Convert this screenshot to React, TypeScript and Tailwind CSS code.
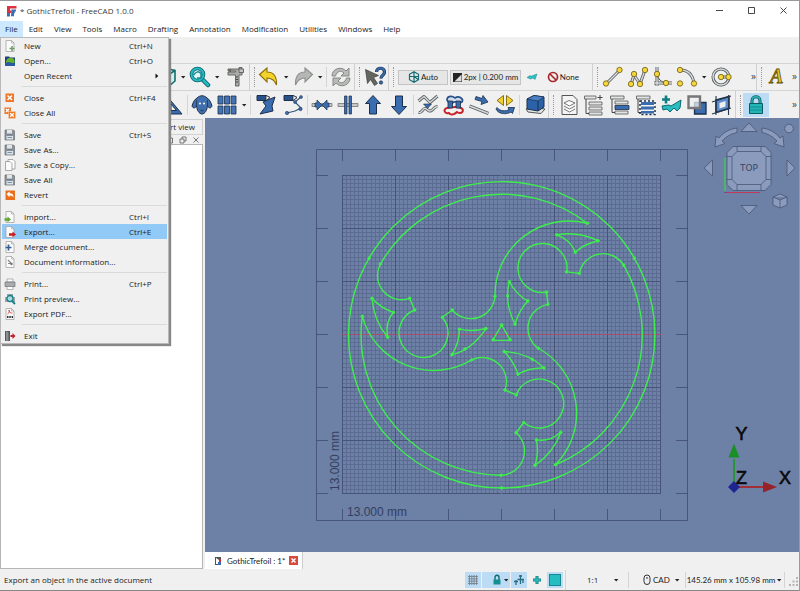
import React from "react";

type Kids = { children: React.ReactNode };

/* ---------- shared icon helpers ---------- */

const NAVY = "#1c2f4a";
const BLUE = "#3a6db0";

function Glyph({ children }: Kids) {
  return (
    <svg viewBox="0 0 22 22" className="size-[22px] shrink-0" fill="none" aria-hidden="true">
      {children}
    </svg>
  );
}

function Mini({ children }: Kids) {
  return (
    <svg viewBox="0 0 12 12" className="size-3 shrink-0" fill="none" aria-hidden="true">
      {children}
    </svg>
  );
}

function Caret() {
  return (
    <svg viewBox="0 0 8 8" className="size-2 shrink-0" aria-hidden="true">
      <path d="M2 3h4.400L4.200 5.600z" fill="#222" />
    </svg>
  );
}

function Tool({ label, drop, children }: Kids & { label: string; drop?: boolean }) {
  return (
    <button
      type="button"
      aria-label={label}
      className={
        drop
          ? "flex h-6 w-[34px] shrink-0 items-center pl-px"
          : "flex h-6 min-w-[25px] flex-1 items-center justify-center"
      }
    >
      {children}
      {drop && (
        <span className="ml-0.5">
          <Caret />
        </span>
      )}
    </button>
  );
}

function Sep() {
  return <span className="mx-px h-5 w-px shrink-0 bg-[#d4d4d4]" />;
}

function Handle() {
  return (
    <span className="flex h-full w-2 shrink-0 items-center border-l border-[#cfcfcf] pl-1">
      <span className="h-5 w-px border-l border-dotted border-[#999]" />
    </span>
  );
}

function Node({ x, y, r = 2.7 }: { x: number; y: number; r?: number }) {
  return <circle cx={x} cy={y} r={r} fill="#f5d63c" stroke="#6b5a10" strokeWidth=".8" />;
}

function Pipe({ d }: { d: string }) {
  return (
    <>
      <path d={d} stroke="#555a5e" strokeWidth="3" strokeLinejoin="round" />
      <path d={d} stroke="#d9dcdc" strokeWidth="1.400" strokeLinejoin="round" />
    </>
  );
}

/* ---------- file menu ---------- */

function Sheet({ children }: { children?: React.ReactNode }) {
  return (
    <Mini>
      <path d="M2 .5h5.500L10 3v8.500H2z" fill="#fbfbfb" stroke="#9a9a9a" strokeWidth=".7" />
      <path d="M7.500.5V3H10" stroke="#9a9a9a" strokeWidth=".6" />
      {children}
    </Mini>
  );
}

function Floppy() {
  return (
    <Mini>
      <path d="M1 1h8.500l1 1v9H1z" fill="#8f9396" stroke="#6a6e72" strokeWidth=".7" />
      <path d="M3 1h5v3.500H3z" fill="#e3e6e8" />
      <path d="M2.500 7H9v3.500H2.500z" fill="#dbe2e8" />
      <path d="M3 5.700h5.500M3.500 8.500H8" stroke="#5a7ca6" strokeWidth=".8" />
    </Mini>
  );
}

function Cross({ small }: { small?: boolean }) {
  if (small)
    return (
      <Mini>
        <path d="M.5.5h6.500v6.500H.5z" fill="#ee7624" />
        <path d="M4.500 4.500h7v7h-7z" fill="#ee7624" stroke="#f7d3b8" strokeWidth=".5" />
        <path d="M2 2l2.500 2.500M5 2L2 5M6.200 6.200l3.600 3.600M9.800 6.200L6.200 9.800" stroke="#fff" strokeWidth="1.300" />
      </Mini>
    );
  return (
    <Mini>
      <path d="M1.500 1.500H10V10H1.500z" fill="#ee7624" />
      <path d="M3.500 3.500L8 8M8 3.500L3.500 8" stroke="#fff" strokeWidth="1.500" />
    </Mini>
  );
}

const folder = (
  <Mini>
    <path d="M1 1.500h4l1 1h5V11H1z" fill="#1f3f78" />
    <path d="M2 6c1-4 7-4.500 8.500-1v3H2z" fill="#63b32e" />
    <path d="M1 8l3-1 7 1.500V11H1z" fill="#2a5aa0" />
  </Mini>
);

type Entry = { label: string; keys?: string; icon?: React.ReactNode; sub?: boolean };

const fileMenu: Entry[][] = [
  [
    { label: "New", keys: "Ctrl+N", icon: <Sheet><path d="M8 6v5M5.500 8.500h5" stroke="#6f9a66" strokeWidth="1.500" /></Sheet> },
    { label: "Open...", keys: "Ctrl+O", icon: folder },
    { label: "Open Recent", sub: true },
  ],
  [
    { label: "Close", keys: "Ctrl+F4", icon: <Cross /> },
    { label: "Close All", icon: <Cross small /> },
  ],
  [
    { label: "Save", keys: "Ctrl+S", icon: <Floppy /> },
    { label: "Save As...", icon: <Floppy /> },
    {
      label: "Save a Copy...",
      icon: (
        <Mini>
          <path d="M4 .5h5l2 2v7.500H4z" fill="#fff" stroke="#888" strokeWidth=".7" />
          <path d="M1.500 2.500h4.500l2 2v7H1.500z" fill="#fbfbfb" stroke="#888" strokeWidth=".7" />
        </Mini>
      ),
    },
    { label: "Save All", icon: <Floppy /> },
    {
      label: "Revert",
      icon: (
        <Mini>
          <path d="M1.500 1.500h9.500v9.500H1.500z" fill="#e8701c" />
          <path d="M2.500 5l3-2.500v1.700c3 0 4 1.500 4 4.300-1-1.500-2-2-4-2v1.700z" fill="#fff" />
        </Mini>
      ),
    },
  ],
  [
    { label: "Import...", keys: "Ctrl+I", icon: <Sheet><path d="M.5 7.300h3V5.500L7 8.500l-3.500 2.800V9.700h-3z" fill="#5fa630" /></Sheet> },
    { label: "Export...", keys: "Ctrl+E", icon: <Sheet><path d="M5 7.300h3.500V5.500L12 8.500l-3.500 2.800V9.700H5z" fill="#c81e1e" /></Sheet> },
    { label: "Merge document...", icon: <Sheet><path d="M4.500 3.500v6M1.500 6.500h6" stroke="#355f94" strokeWidth="1.700" /></Sheet> },
    {
      label: "Document information...",
      icon: (
        <Sheet>
          <path d="M4 4l4 4M4 7.500h3" stroke="#888" strokeWidth="1.200" />
          <circle cx="7.500" cy="8" r="1.200" fill="#777" />
        </Sheet>
      ),
    },
  ],
  [
    {
      label: "Print...",
      keys: "Ctrl+P",
      icon: (
        <Mini>
          <path d="M3 1h6v3H3zM3 7.500h6v4H3z" fill="#fff" stroke="#888" strokeWidth=".6" />
          <path d="M1 4h10v4.500H1z" fill="#a9acae" stroke="#6f7274" strokeWidth=".7" />
        </Mini>
      ),
    },
    {
      label: "Print preview...",
      icon: (
        <Mini>
          <path d="M1 4h10v5H1zM3 1h6v3H3z" fill="#9fa3a6" />
          <circle cx="6" cy="5.500" r="3" fill="#a6dcdc" stroke="#16808a" strokeWidth="1.300" />
          <path d="M8 8l3 3" stroke="#16808a" strokeWidth="1.800" />
        </Mini>
      ),
    },
    {
      label: "Export PDF...",
      icon: (
        <Sheet>
          <path d="M3.500 6c2-1 2-3 1.500-4 0 2 2 3.500 3.500 3" stroke="#d03030" strokeWidth=".8" />
          <path d="M3 9h1.500M5.300 9h1.500M7.600 9H9" stroke="#333" strokeWidth="2" />
        </Sheet>
      ),
    },
  ],
  [
    {
      label: "Exit",
      icon: (
        <Mini>
          <path d="M1 1h5v10H1z" fill="#55585a" />
          <path d="M2 1l2.500 1.500v9L2 10.500z" fill="#8d9092" />
          <path d="M6.500 5h2V3L11.500 6l-3 3V7h-2z" fill="#c81e2e" />
        </Mini>
      ),
    },
  ],
];

function FileMenu() {
  return (
    <div
      role="menu"
      className="absolute top-full left-0 z-20 w-[169px] border border-[#b9b9b9] bg-[#f0f0f0] px-px shadow-[2px_2px_1px_#888]"
    >
      {fileMenu.map((section, i) => (
        <div key={i} role="group">
          {i > 0 && <div className="my-[3px] ml-5 h-px bg-[#dadada]" />}
          {section.map((e) => (
            <button
              key={e.label}
              type="button"
              role="menuitem"
              className={
                e.label === "Export..."
                  ? "flex h-[15px] w-full items-center bg-[#91c9f7] pl-0.5 text-left"
                  : "flex h-[15px] w-full items-center pl-0.5 text-left"
              }
            >
              <span className="w-5 shrink-0">{e.icon}</span>
              <span className="flex-1 whitespace-nowrap">{e.label}</span>
              {e.keys && <span className="w-[38px] whitespace-nowrap">{e.keys}</span>}
              {e.sub && (
                <svg viewBox="0 0 8 8" className="mr-1.5 size-2" aria-hidden="true">
                  <path d="M2.500 1.500v5L5.300 4z" fill="#111" />
                </svg>
              )}
            </button>
          ))}
        </div>
      ))}
    </div>
  );
}

/* ---------- window chrome ---------- */

function TitleBar() {
  return (
    <header className="flex h-[19px] items-center bg-white pl-1.5 text-[#3a3a3a]">
      <svg viewBox="0 0 12 12" className="size-3" aria-hidden="true">
        <path d="M1 1h9.500v2.500H4v2h1.500v2.500H4V10H1z" fill="#dc3340" />
        <path d="M5.500 4.500H10V6.500H8.500l.5 1.200-1 1v2.500H5z" fill="#3b6db8" />
        <path d="M1 8h3v3.500H1z" fill="#3b6db8" />
      </svg>
      <h1 className="ml-0.5 flex-1 whitespace-nowrap">* GothicTrefoil - FreeCAD 1.0.0</h1>
      {[
        ["Minimize", "M1 4.500h7"],
        ["Maximize", "M1.500 1.500h6v6h-6z"],
        ["Close", "M1.500 1.500l6 6M7.500 1.500l-6 6"],
      ].map(([label, d]) => (
        <button key={label} type="button" aria-label={label} className="flex w-8 justify-center">
          <svg viewBox="0 0 9 9" className="size-[9px]" fill="none" stroke="#333" strokeWidth=".9" aria-hidden="true">
            <path d={d} />
          </svg>
        </button>
      ))}
    </header>
  );
}

const menus = ["File", "Edit", "View", "Tools", "Macro", "Drafting", "Annotation", "Modification", "Utilities", "Windows", "Help"];

function MenuBar() {
  return (
    <nav className="relative flex h-[17px] shrink-0 items-center gap-px bg-white">
      {menus.map((m) => (
        <button
          key={m}
          type="button"
          className={m === "File" ? "h-4 bg-[#cce8ff] px-[5px]" : "h-4 px-[5px]"}
        >
          {m}
        </button>
      ))}
      <FileMenu />
    </nav>
  );
}

/* ---------- toolbars ---------- */

const upArrow = "M11 1.500l7.500 8h-4V20h-7V9.500h-4z";

function More() {
  return <span className="w-2 shrink-0 text-center text-[10px] leading-none text-[#444]">»</span>;
}

function TopTools() {
  return (
    <div className="flex h-[27px] items-center border-t border-[#d4d4d4] pl-[154px]">
      <Tool label="Standard views" drop>
        <Glyph>
          <path d="M4 6l7-3.500 9 2V15l-6 5-10-3z" fill="#d4eeee" stroke="#136e6e" strokeWidth="1.600" />
          <path d="M4 6l10 2.500 6-4M14 8.500V20" stroke="#136e6e" strokeWidth="1.600" />
        </Glyph>
      </Tool>
      <Tool label="Fit all" drop>
        <Glyph>
          <path d="M13 13l6 6" stroke="#0c5f66" strokeWidth="4.500" strokeLinecap="round" />
          <path d="M13 13l6 6" stroke="#23bcc4" strokeWidth="2.600" strokeLinecap="round" />
          <circle cx="8.500" cy="8.500" r="6" fill="#dff4f4" stroke="#0c5f66" strokeWidth="3.600" />
          <circle cx="8.500" cy="8.500" r="6" stroke="#23bcc4" strokeWidth="2" />
          <path d="M4.500 9c3-4 5-4 8-1M8 12h4V8" stroke="#168a90" strokeWidth="1.500" />
        </Glyph>
      </Tool>
      <span className="flex w-[27px]">
        <Tool label="Measure">
          <Glyph>
            <path d="M3 3h11V1.500h3V9h-3v11h-3.500V9H3V6h7.500V5H3z" fill="#a9aca8" stroke="#5b5e5a" strokeWidth=".9" />
            <path d="M14 3h4.500v3.500H14z" fill="#c4c6c4" stroke="#5b5e5a" strokeWidth=".9" />
            <path d="M11 11h2M11 13.500h2M11 16h2M5 3v3" stroke="#444" />
          </Glyph>
        </Tool>
      </span>
      <Handle />
      <Tool label="Undo" drop>
        <Glyph>
          <path d="M1.500 8.500L9 2v4c7 0 10 5 9.500 13-2-5-4.500-7-9.500-7v4z" fill="#f2d32c" stroke="#8a6d05" strokeWidth="1.100" />
        </Glyph>
      </Tool>
      <Tool label="Redo" drop>
        <Glyph>
          <path d="M20.500 8.500L13 2v4c-7 0-10 5-9.500 13 2-5 4.500-7 9.500-7v4z" fill="#b5b7b5" stroke="#8c8e8c" strokeWidth="1.100" />
        </Glyph>
      </Tool>
      <Sep />
      <span className="flex w-[26px]">
        <Tool label="Refresh">
          <Glyph>
            <path d="M2 10c0-8 10-10 14-5l3-3v8h-8l3-3C11 4 7 5 5.500 10z" fill="#b9bbb9" stroke="#858785" />
            <path d="M20 12c0 8-10 10-14 5l-3 3v-8h8l-3 3c3 3 7 2 8.500-3z" fill="#b9bbb9" stroke="#858785" />
          </Glyph>
        </Tool>
      </span>
      <Handle />
      <span className="flex w-[26px]">
        <Tool label="What's this?">
          <Glyph>
            <path d="M1.500 3.500l13 6-5 2 4 6-3 2-4-6-3 4z" fill="#62665f" stroke="#3b3e39" strokeWidth=".7" />
            <path d="M12.500 6c0-5 8-5 8 0 0 3.500-3.500 3-3.500 6.500" stroke={NAVY} strokeWidth="3.200" />
            <path d="M12.500 6c0-5 8-5 8 0 0 3.500-3.500 3-3.500 6.500" stroke={BLUE} strokeWidth="1.800" />
            <circle cx="17" cy="16.500" r="1.700" fill={BLUE} stroke={NAVY} strokeWidth=".7" />
          </Glyph>
        </Tool>
      </span>
      <Handle />
      <div className="flex items-center gap-0.5 pl-0.5 font-['Lato','Noto_Sans',sans-serif] whitespace-nowrap">
        <button type="button" className="flex h-[15px] w-[50px] items-center justify-center gap-px border border-[#c4c4c4] bg-[#e6e6e6]">
          <svg viewBox="0 0 12 12" className="size-3" fill="none" stroke="#136e74" strokeWidth="1.200" aria-hidden="true">
            <path d="M6 .8l4.500 2.500v5.400L6 11.200 1.500 8.700V3.300zM6 .8v10.400M1.500 5.500h9M6 5.500l4.500 3.200" />
          </svg>
          Auto
        </button>
        <button type="button" className="flex h-[15px] w-[71px] items-center justify-center gap-0.5 border border-[#c4c4c4] bg-[#e6e6e6]">
          <svg viewBox="0 0 9 9" className="size-[9px] shrink-0" aria-hidden="true">
            <path d="M0 0h9v9H0z" fill="#222" />
            <path d="M8.500 1.500v7h-7z" fill="#ddd" />
          </svg>
          2px | 0.200 mm
        </button>
        <button type="button" aria-label="Apply current style" className="flex w-[18px] justify-center">
          <svg viewBox="0 0 12 8" className="h-2 w-3" aria-hidden="true">
            <path d="M1 4.500l3-2 1 .8L11 1 9 6.500 7 5 4.500 6z" fill="#2fc0c6" stroke="#178287" strokeWidth=".5" />
          </svg>
        </button>
        <button type="button" className="flex w-9 items-center justify-end gap-px">
          <svg viewBox="0 0 12 12" className="size-3" fill="none" stroke="#a8262b" strokeWidth="1.700" aria-hidden="true">
            <circle cx="6" cy="6" r="4.500" />
            <path d="M3 3l6 6" />
          </svg>
          None
        </button>
      </div>
      <div className="ml-auto flex h-full w-[207px] shrink-0 items-center">
        <Handle />
        <span className="flex w-[75px]">
          <Tool label="Line">
            <Glyph>
              <Pipe d="M4 18L18 4" />
              <Node x={4} y={17.500} />
              <Node x={17.500} y={4} />
            </Glyph>
          </Tool>
          <Tool label="Polyline">
            <Glyph>
              <Pipe d="M4 18L7 9l6 9 5-14" />
              <Node x={4} y={18} />
              <Node x={7} y={8} />
              <Node x={13} y={18} />
              <Node x={18} y={4} />
            </Glyph>
          </Tool>
          <Tool label="Fillet">
            <Glyph>
              <Pipe d="M5 1v19M2 17h18" />
              <path d="M5 8c1 5 4 8 9 9" stroke="#555" />
              <Node x={5} y={8} />
              <Node x={14} y={17} />
            </Glyph>
          </Tool>
        </span>
        <Tool label="Arc tools" drop>
          <Glyph>
            <Pipe d="M4 4c8 0 13 5 14 14" />
            <Node x={4} y={4} />
            <Node x={4} y={17.500} />
            <Node x={18} y={17.500} />
          </Glyph>
        </Tool>
        <span className="flex w-[26px]">
          <Tool label="Circle">
            <Glyph>
              <circle cx="10" cy="11" r="8" stroke="#4f5458" strokeWidth="3" />
              <circle cx="10" cy="11" r="8" stroke="#d9dcdc" strokeWidth="1.400" />
              <Pipe d="M10 11h7" />
              <Node x={10} y={11} />
              <Node x={17.500} y={11} />
            </Glyph>
          </Tool>
        </span>
        <span className="ml-auto">
          <More />
        </span>
        <Handle />
        <span className="flex w-[28px]">
          <Tool label="Text">
            <svg viewBox="0 0 24 24" className="size-6" aria-hidden="true">
              <text x="4" y="18" fontFamily="Liberation Serif, serif" fontSize="20" fontWeight="bold" fontStyle="italic" fill="#e8c623" stroke="#5d4d0a" strokeWidth=".8">A</text>
            </svg>
          </Tool>
        </span>
        <span className="mr-0.5">
          <More />
        </span>
      </div>
    </div>
  );
}

function EditTools() {
  return (
    <div className="flex h-7 items-center border-t border-[#d4d4d4] pl-[160px]">
      <span className="flex w-[26px]">
        <Tool label="Set square">
          <Glyph>
            <path d="M4 20V1l16 19z" fill={BLUE} stroke={NAVY} />
            <path d="M9 16.500V10l5.500 6.500z" fill="#f0f0f0" stroke={NAVY} />
          </Glyph>
        </Tool>
      </span>
      <Sep />
      <span className="flex w-[26px]">
        <Tool label="Shape string">
          <Glyph>
            <path d="M6 4c3-3 7-3 10 0 2 1 4 4 5 8-1 2.500-3 2.500-4.500 0-.5 4-2.500 8-5.500 8s-5-4-5.500-8C4 14.500 2 14.500 1 12c1-4 3-7 5-8z" fill="#416fae" stroke={NAVY} strokeWidth="1" />
            <circle cx="9" cy="9.500" r="1.100" fill="#e8eef6" />
            <circle cx="13" cy="9.500" r="1.100" fill="#e8eef6" />
            <path d="M9.500 16c.5 1 2.500 1 3 0" stroke={NAVY} />
            <path d="M5.500 6v6M16.500 6v6" stroke={NAVY} strokeWidth=".7" />
          </Glyph>
        </Tool>
      </span>
      <Tool label="Array tools" drop>
        <Glyph>
          {[2, 8.5, 15].map((x) => (
            <g key={x} fill="#4274b5" stroke={NAVY} strokeWidth=".8">
              <path d={`M${x} 2h5v8h-5zM${x} 12h5v8h-5z`} />
            </g>
          ))}
        </Glyph>
      </Tool>
      <Sep />
      <span className="flex w-[54px]">
        <Tool label="Edit">
          <Glyph>
            <path d="M8 8l12-5-3 9 1 5-13 3 6-8z" fill={BLUE} stroke={NAVY} />
            <path d="M2 1.500h9l4 2-4 3H2z" fill="#28518c" stroke={NAVY} />
            <path d="M11 1.500l4 2-4 3z" fill="#f5f5f5" stroke="#222" strokeWidth=".7" />
          </Glyph>
        </Tool>
        <Tool label="Sub-element highlight">
          <Glyph>
            <path d="M19 3l-6 5 6 6-6 3-8 2" stroke="#35577f" strokeWidth="1.200" />
            <path d="M2 1.500h9l4 2-4 3H2z" fill="#28518c" stroke={NAVY} />
            <path d="M11 1.500l4 2-4 3z" fill="#f5f5f5" stroke="#222" strokeWidth=".7" />
            <g fill="#3a6db0" stroke={NAVY} strokeWidth=".5">
              <circle cx="19" cy="3" r="1.500" />
              <circle cx="13" cy="8" r="1.500" />
              <circle cx="18.500" cy="15" r="1.700" />
              <circle cx="5" cy="19" r="1.700" />
            </g>
          </Glyph>
        </Tool>
      </span>
      <Sep />
      <span className="flex w-[103px]">
        <Tool label="Join">
          <Glyph>
            <path d="M1 9.500h20v3H1z" fill="#c7c9c9" stroke="#666" strokeWidth=".7" />
            <path d="M4 9h2V6l5 5-5 5v-3H4zM18 9h-2V6l-5 5 5 5v-3h2z" fill={BLUE} stroke={NAVY} strokeWidth=".7" />
          </Glyph>
        </Tool>
        <Tool label="Split">
          <Glyph>
            <path d="M1 9.500h20v3H1z" fill="#c7c9c9" stroke="#666" strokeWidth=".7" />
            <path d="M7.500 2H10v18H7.500zM12 2h2.500v18H12z" fill={BLUE} stroke={NAVY} strokeWidth=".7" />
          </Glyph>
        </Tool>
        <Tool label="Upgrade">
          <Glyph>
            <path d={upArrow} fill={BLUE} stroke={NAVY} />
          </Glyph>
        </Tool>
        <Tool label="Downgrade">
          <Glyph>
            <path d={upArrow} fill={BLUE} stroke={NAVY} transform="rotate(180 11 11)" />
          </Glyph>
        </Tool>
      </span>
      <Sep />
      <span className="flex w-[103px]">
        <Tool label="Wire to B-spline">
          <Glyph>
            <Pipe d="M1.500 7L7 2.500l6 6L20.500 2" />
            <Pipe d="M1.500 18.500c4 1 4-5 7-4s3 4 6 2 3-4 6-4" />
            <path d="M6.500 10h8l-4 4.500z" fill={BLUE} stroke={NAVY} strokeWidth=".6" />
          </Glyph>
        </Tool>
        <Tool label="Draft to sketch">
          <Glyph>
            <path d="M4 14c-4 1-3 6 2 5 2 3 6 1 8-1 5 3 8-2 4-4s-9-1-14 0z" stroke="#c8242a" strokeWidth="2" />
            <path d="M4 6c0-5 6-4 8-2 4-3 9 1 7 4-3 2-5-1-8 0-3 2-6 1-7-2z" fill="#cfdcec" stroke="#28518c" strokeWidth="1.700" />
            <path d="M5 7h4.500v7H5zM13 7h4.500v7H13z" fill={BLUE} stroke={NAVY} strokeWidth=".8" />
          </Glyph>
        </Tool>
        <Tool label="Slope">
          <Glyph>
            <Pipe d="M1.500 12l19 7.500" />
            <path d="M8 2.500l6 2 1-3 5 6.500-7 2.500 1-3-7-2z" fill={BLUE} stroke={NAVY} strokeWidth=".8" />
          </Glyph>
        </Tool>
        <Tool label="Flip dimension">
          <Glyph>
            <path d="M9.500 1.500v10L3 6.500zM12.500 1.500v10l6.500-5z" fill="#f2d32c" stroke="#7a6208" strokeWidth=".9" />
            <path d="M3 13.500c3 4 9 4 12 2l-1-2h6.500l-2 6-1.500-1.500C12 21 4 20 2 15z" fill={BLUE} stroke={NAVY} strokeWidth=".8" />
          </Glyph>
        </Tool>
      </span>
      <Sep />
      <span className="flex w-[27px]">
        <Tool label="Shape 2D view">
          <Glyph>
            <path d="M2 15l5-2 14 2-4 4.500L4 18z" fill="#e3e5e5" stroke="#555" />
            <path d="M3 5l7-3.500L20 3v10l-6 4-11-2z" fill="#2c62a8" stroke={NAVY} />
            <path d="M3 5l7-3.500L20 3l-6 4z" fill="#4b82c7" stroke={NAVY} strokeWidth=".7" />
            <path d="M14 7v10" stroke={NAVY} />
          </Glyph>
        </Tool>
      </span>
      <Handle />
      <span className="flex w-[179px]">
        <Tool label="Layer manager">
          <Glyph>
            <path d="M4 1.500h11l4 4v15H4z" fill="#f4f4f4" stroke="#555" />
            <path d="M6 9l5-2.500L17 9l-5.500 3zM6 12l5.500 3 5.500-3M6 15l5.500 3 5.500-3" fill="#fff" stroke="#666" strokeWidth=".9" />
          </Glyph>
        </Tool>
        <Tool label="Add named group">
          <Glyph>
            <path d="M1.500 2H13v3H1.500zM6 8h13v3H6zM6 13h13v3H6zM6 18h13v3H6z" fill="#e2e4e4" stroke="#555" strokeWidth=".8" />
            <path d="M3 5v14.500h3M17 1v5M14.500 3.500h5" stroke="#444" />
          </Glyph>
        </Tool>
        <Tool label="Move to group">
          <Glyph>
            <path d="M1.500 2H15v3H1.500zM6 7h13v3H6zM6 17h13v3H6z" fill="#e2e4e4" stroke="#555" strokeWidth=".8" />
            <path d="M3 5v13.500h3" stroke="#444" />
            <path d="M6 11.500h14v4H6z" fill={BLUE} stroke={NAVY} strokeWidth=".8" />
          </Glyph>
        </Tool>
        <Tool label="Select group">
          <Glyph>
            <path d="M1.500 2H15v3H1.500z" fill="#e2e4e4" stroke="#555" strokeWidth=".8" />
            <path d="M3 5v13.500h3" stroke="#444" />
            <path d="M6 8h13v3H6zM6 12.500h13v3H6zM6 17h13v2.500H6z" fill={BLUE} />
            <path d="M5 7h15v13.500H5z" stroke={NAVY} strokeWidth="1.500" strokeDasharray="2 2" />
          </Glyph>
        </Tool>
        <Tool label="Add construction">
          <Glyph>
            <path d="M6 1.500v8M2 5.500h8" stroke="#0e7e80" strokeWidth="2.600" />
            <path d="M2 12l7-1 2 1 10-6-1 8-3 3-3-3-4 4-3-3-4 1z" fill="#2abcc0" stroke="#0b6a6d" />
          </Glyph>
        </Tool>
        <Tool label="Toggle display mode">
          <Glyph>
            <path d="M8.500 8.500H20V20H8.500z" fill={BLUE} stroke={NAVY} strokeWidth="1.300" />
            <path d="M2.500 2.500H14V14H2.500z" fill="#eef0f2" fillOpacity=".75" stroke="#777" strokeWidth="2.400" />
          </Glyph>
        </Tool>
        <Tool label="Working plane proxy">
          <Glyph>
            <path d="M5 6l13-3.500v12L5 18.500z" fill="#5b8ccb" stroke={NAVY} strokeWidth="1.600" />
            <path d="M8.500 9l6-2v5.500l-6 2z" fill="#f0f0f0" />
            <path d="M1 8l19-6M1 20l19-6M5 2v19M17.500 1v20" stroke="#26384f" strokeWidth="1.100" />
          </Glyph>
        </Tool>
      </span>
      <Handle />
      <button type="button" aria-label="Snap lock" className="flex h-6 w-[26px] items-center justify-center bg-[#bcdcf6]">
        <Glyph>
          <path d="M7 10V6.500c0-5 8-5 8 0V10" stroke="#0d5c60" strokeWidth="3" />
          <path d="M7 10V6.500c0-5 8-5 8 0V10" stroke="#2fb7bb" strokeWidth="1.300" />
          <path d="M4.500 9.500h13v10h-13z" fill="#22b5b8" stroke="#0d5c60" />
          <path d="M5 13h12M5 16h12" stroke="#148a8e" />
        </Glyph>
      </button>
      <span className="mr-0.5 ml-auto">
        <More />
      </span>
    </div>
  );
}

/* ---------- docked panel ---------- */

function ReportPanel() {
  return (
    <aside className="flex w-[205px] shrink-0 flex-col bg-[#f0f0f0] pr-0.5">
      <div className="flex h-4 items-end justify-end">
        <button type="button" className="h-[15px] border border-b-0 border-[#d0d0d0] px-[7px]">
          Report view
        </button>
      </div>
      <div className="flex h-[10px] items-center justify-end gap-[5px] border-t border-[#d0d0d0] pr-[3px]">
        {[
          ["Undock", "M1.500 2h5v5h-5z"],
          ["Overlay", "M1 3h4v4H1zM3 3V1h4v4H5"],
          ["Close panel", "M1.500 1.500l5 5M6.500 1.500l-5 5"],
        ].map(([label, d]) => (
          <button key={label} type="button" aria-label={label}>
            <svg viewBox="0 0 8 8" className="size-2" fill="none" stroke="#666" strokeWidth=".9" aria-hidden="true">
              <path d={d} />
            </svg>
          </button>
        ))}
      </div>
      <div className="flex-1 border border-[#b5b5b5] bg-white" />
    </aside>
  );
}

/* ---------- 3D view ---------- */

const ticks = [26.5, 79.5, 132.5, 185.5, 238.5, 291.5, 344.5];
const minor = Array.from({ length: 79 }, (_, i) => 26.5 + (i * 318) / 78);

/* One third of the trefoil; coordinates are relative to its centre. */
const lobe =
  "M85.700-111.500A140.500 140.500 0 0 0-121.300-70.800A24.200 24.200 0 0 0-92-36.500L-87-24.800A24.500 24.500 0 1 0-59.300-17.500L-49.500-24.800A24.300 24.300 0 0 0-6.700-38.500A74 74 0 0 1 85.700-111.500Z";
const outerBarb = "M-129.700-36.500Q-120-26-108.300-22.500Q-117-12-114 2.500Q-128-14-129.700-36.500Z";
const innerBarb = "M7.700-53.100Q14-41 26-33.800Q17-24 13.300-10.500Q2-33 7.700-53.100Z";
const knots = [
  [85.7, -111.5], [-121.3, -70.8], [-92, -36.5], [-87, -24.8], [-59.3, -17.5], [-49.5, -24.8],
  [-6.7, -38.5], [-129.7, -36.5], [-108.3, -22.5], [-114, 2.5], [7.7, -53.1], [26, -33.8],
  [13.3, -10.5], [6, -38.8], [0, 153.2], [0, -9.8],
];

function Sketch() {
  return (
    <svg viewBox="0 0 372 372" className="size-[372px] shrink-0" fill="none" role="img" aria-label="Gothic trefoil sketch">
      <g stroke="#5b6b92" shapeRendering="crispEdges">
        {minor.map((v) => (
          <path key={v} d={`M${v} 26V345M26 ${v}H345`} />
        ))}
      </g>
      <g stroke="#435174" strokeWidth=".9">
        <path d="M.5.5h371v371H.5z" />
        {ticks.map((v) => (
          <path key={v} d={`M${v} 26V345M26 ${v}H345M${v} 0v12M${v} 360v12M0 ${v}h12M360 ${v}h12`} />
        ))}
      </g>
      <path d="M26 185.500H345" stroke="#a4506c" />
      <path d="M185.500 26V345" stroke="#46a56c" strokeWidth=".8" />
      <g fill="#333f5e" fontFamily="Liberation Sans, Arial, sans-serif" fontSize="12">
        <text x="31" y="367">13.000 mm</text>
        <text transform="translate(23 342) rotate(-90)">13.000 mm</text>
      </g>
      <g transform="translate(185.700 185.800)" stroke="#3dee4c" strokeWidth="1.400" strokeLinejoin="round">
        <circle r="153.200" />
        <path d="M0-9.800L-9 5.600H8.700Z" />
        {[0, 120, 240].map((a) => (
          <g key={a} transform={`rotate(${a})`}>
            <path d={lobe} />
            <path d={outerBarb} />
            <path d={innerBarb} />
            {knots.map(([x, y]) => (
              <circle key={`${x},${y}`} cx={x} cy={y} r="1.400" fill="#3dee4c" strokeWidth=".6" />
            ))}
          </g>
        ))}
      </g>
    </svg>
  );
}

function NavCube() {
  return (
    <svg viewBox="0 0 96 98" className="absolute top-0 right-0 h-[98px] w-24" fill="none" aria-hidden="true">
      <g fill="#8b9bbd" stroke="#414d6b" strokeWidth=".7" strokeLinejoin="round">
        <path d="M46 5l8 8.500H38zM46 96l-8-8.500h16zM1 50l8.500-8v16zM92 50l-8-8v16z" />
        <path d="M34 10C26 11 20 15 16 20l-3-2-1 11 10-3.500-3-2.500C23 19 27 16 34 14.500zM59 10c8 1 14 5 18 10l3-2 1 11-10-3.500 3-2.500C70 19 66 16 59 14.500z" />
        <circle cx="86" cy="10.500" r="4.300" />
        <path d="M30 28.500h32l6 6v32l-6 6H30l-6-6v-32z" />
        <path d="M34 33.500h24l5 5v23l-5 5H34l-5-5v-23z" />
        <path d="M34 28.500v5M58 28.500v5M34 66.500v6M58 66.500v6M24 38.500h5M24 61.500h5M63 38.500h5M63 61.500h5" />
        <path d="M70 79l7-3 7 3v8l-7 3-7-3zM70 79l7 3 7-3M77 82v8" />
      </g>
      <path d="M22 40v33" stroke="#3fd14a" strokeWidth="1.300" />
      <path d="M22 74.500h35" stroke="#c23a5a" strokeWidth="1.200" />
      <path d="M21.500 74h1v1h-1z" fill="#2a3ad0" />
      <text x="46" y="53" textAnchor="middle" fontFamily="DejaVu Sans, sans-serif" fontSize="9" fill="#3c4761">TOP</text>
    </svg>
  );
}

function AxisCross() {
  return (
    <svg viewBox="0 0 76 84" className="absolute right-0 bottom-[51px] h-[84px] w-[76px]" aria-hidden="true">
      <path d="M11 70V42" stroke="#1f9a2c" strokeWidth="1.800" />
      <path d="M11 26.500l5.500 14h-11z" fill="#1b8f27" />
      <path d="M11 70h32" stroke="#a8262c" strokeWidth="1.800" />
      <path d="M54 70l-14 5.500v-11z" fill="#98222a" />
      <path d="M11 64l6 6-6 6-6-6z" fill="#1f2490" />
      <g fontFamily="Liberation Sans, Arial, sans-serif" fontSize="18" fill="#0a0a0a" stroke="#0a0a0a" strokeWidth=".6">
        <text x="12.500" y="23">Y</text>
        <text x="13" y="67">Z</text>
        <text x="56" y="67">X</text>
      </g>
    </svg>
  );
}

function DocumentArea() {
  return (
    <main className="flex min-w-0 flex-1 flex-col">
      <div className="relative flex flex-1 items-center justify-center overflow-hidden bg-[#6d80a6]">
        <Sketch />
        <NavCube />
        <AxisCross />
      </div>
      <div className="flex h-[17px] shrink-0 bg-[#f0f0f0]">
        <div className="flex w-[98px] items-center gap-1 border-r border-[#ccc] bg-white pl-2 whitespace-nowrap">
          <svg viewBox="0 0 10 10" className="size-[10px] shrink-0" aria-hidden="true">
            <path d="M2 1h6v8H2z" fill="#555" />
            <path d="M3 2l3 2v4H3z" fill="#fff" />
            <path d="M6 3h2v3H6z" fill="#c62f3a" />
            <path d="M5 6h3v3H5z" fill="#3b6db8" />
          </svg>
          <span className="flex-1 font-['Lato','Noto_Sans',sans-serif]">GothicTrefoil : 1*</span>
          <button type="button" aria-label="Close document" className="mr-2">
            <svg viewBox="0 0 9 9" className="size-[9px]" aria-hidden="true">
              <path d="M0 0h9v9H0z" fill="#d94a3c" />
              <path d="M2.500 2.500l4 4M6.500 2.500l-4 4" stroke="#fff" strokeWidth="1.400" />
            </svg>
          </button>
        </div>
      </div>
    </main>
  );
}

/* ---------- status bar ---------- */

function StatusBar() {
  return (
    <footer className="flex h-[22px] shrink-0 items-center border-b border-[#888] bg-[#f0f0f0] pl-1">
      <output className="flex-1 whitespace-nowrap">Export an object in the active document</output>
      <div className="flex shrink-0 items-center gap-px">
        <button type="button" aria-label="Grid" className="flex h-4 w-4 items-center justify-center bg-[#bcdcf6]">
          <svg viewBox="0 0 12 12" className="size-3" stroke="#77828c" strokeWidth=".9" aria-hidden="true">
            <path d="M1 2.500h10M1 4.800h10M1 7.100h10M1 9.500h10M2.500 1v10M4.800 1v10M7.100 1v10M9.500 1v10" />
          </svg>
        </button>
        <button type="button" aria-label="Snap options" className="flex h-4 w-7 items-center justify-end bg-[#bcdcf6]">
          <svg viewBox="0 0 10 12" className="h-3 w-[10px]" fill="none" aria-hidden="true">
            <path d="M3 6V3.500c0-3 4-3 4 0V6" stroke="#0d6c70" strokeWidth="1.400" />
            <path d="M1.500 5.500h7v5h-7z" fill="#149094" />
          </svg>
          <Caret />
        </button>
        <button type="button" aria-label="Snap dimensions" className="flex h-4 w-4 items-center justify-center bg-[#bcdcf6]">
          <svg viewBox="0 0 12 12" className="size-3" fill="none" stroke="#276d86" strokeWidth="1.300" aria-hidden="true">
            <path d="M7.500 1v9M4.500 5.500h6.500M1 7.500h4M3 6v5M6 2h3M10 5v4" />
          </svg>
        </button>
        <button type="button" aria-label="Ortho" className="flex h-4 w-[18px] items-center justify-center">
          <svg viewBox="0 0 10 10" className="size-[10px]" aria-hidden="true">
            <path d="M5 1v8M1 5h8" stroke="#0f8084" strokeWidth="3" />
            <path d="M5 1.500v7M1.500 5h7" stroke="#30babd" strokeWidth="1.400" />
          </svg>
        </button>
        <button type="button" aria-label="Working plane" className="flex h-4 w-4 items-center justify-center bg-[#bcdcf6]">
          <span className="size-3 border border-[#18888c] bg-[#27bcc2]" />
        </button>
        <Sep />
      </div>
      <label className="flex h-4 w-[62px] shrink-0 items-center justify-between border-r border-[#d4d4d4] pr-2 pl-5">
        <select aria-label="Scale" className="w-5 appearance-none bg-transparent outline-none">
          <option>1:1</option>
        </select>
        <Caret />
      </label>
      <label className="flex h-4 w-[57px] shrink-0 items-center border-r border-[#d4d4d4] pl-3.5">
        <svg viewBox="0 0 8 12" className="h-3 w-2 shrink-0" fill="none" stroke="#333" aria-hidden="true">
          <rect x="1" y="1" width="6" height="9.500" rx="3" />
          <path d="M4 3v2" />
        </svg>
        <select aria-label="Navigation style" className="ml-0.5 w-5 appearance-none bg-transparent font-['Lato','Noto_Sans',sans-serif] outline-none">
          <option>CAD</option>
        </select>
        <Caret />
      </label>
      <button type="button" className="flex h-4 w-[99px] shrink-0 items-center justify-center border-r border-[#d4d4d4] font-['Lato','Noto_Sans',sans-serif] whitespace-nowrap">
        145.26 mm x 105.98 mm
        <Caret />
      </button>
      <svg viewBox="0 0 14 14" className="size-3.5 shrink-0" fill="#b4b4b4" aria-hidden="true">
        <path d="M11 4h2v2h-2zM11 7.500h2v2h-2zM11 11h2v2h-2zM7.500 7.500h2v2h-2zM7.500 11h2v2h-2zM4 11h2v2H4z" />
      </svg>
    </footer>
  );
}

export default function App() {
  return (
    <div className="flex min-h-screen flex-col border-t border-r border-[#9a9a9a] bg-[#f0f0f0] font-['Open_Sans','Noto_Sans',sans-serif] text-[8px] leading-3 text-[#222]">
      <TitleBar />
      <MenuBar />
      <div className="h-[26px] shrink-0" />
      <TopTools />
      <EditTools />
      <div className="flex flex-1">
        <ReportPanel />
        <DocumentArea />
      </div>
      <StatusBar />
    </div>
  );
}
